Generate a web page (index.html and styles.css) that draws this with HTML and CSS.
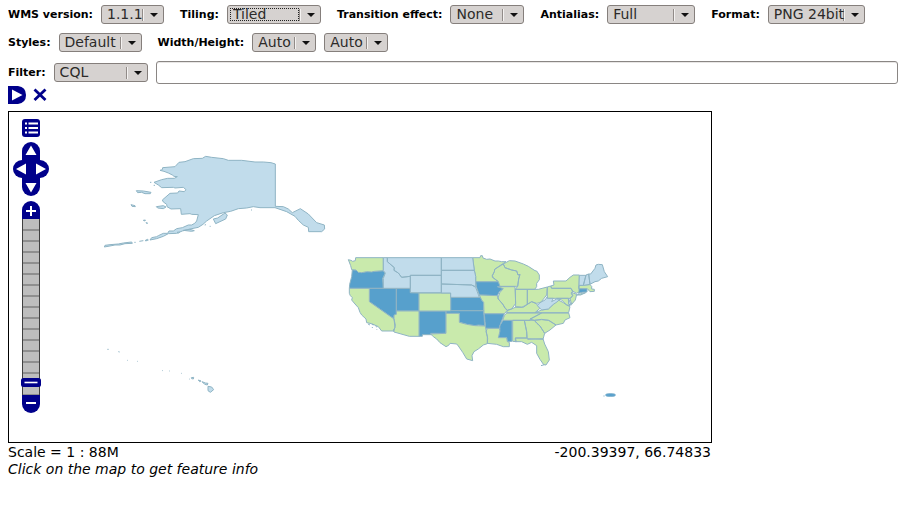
FILE: index.html
```html
<!DOCTYPE html>
<html lang="en">
<head>
<meta charset="utf-8">
<title>Map preview</title>
<link rel="stylesheet" href="styles.css">
</head>
<body>
<form class="toolbar">
  <div class="row">
    <div class="field"><label for="version">WMS version:</label><select id="version" class="w-version"><option>1.1.1</option><option>1.3.0</option></select></div>
    <div class="field"><label for="tiling">Tiling:</label><span class="focus-frame"><select id="tiling" class="w-wide"><option>Tiled</option><option>Single tile</option></select></span></div>
    <div class="field"><label for="transition">Transition effect:</label><select id="transition" class="w-transition"><option>None</option><option>Resize</option></select></div>
    <div class="field"><label for="antialias">Antialias:</label><select id="antialias" class="w-antialias"><option>Full</option><option>Text only</option><option>Disabled</option></select></div>
    <div class="field"><label for="format">Format:</label><select id="format" class="w-format"><option>PNG 24bit</option><option>PNG 8bit</option><option>GIF</option><option>JPEG</option></select></div>
  </div>
  <div class="row">
    <div class="field"><label for="styles">Styles:</label><select id="styles" class="w-styles"><option>Default</option></select></div>
    <div class="field"><label for="width">Width/Height:</label><select id="width" class="w-size"><option>Auto</option><option>600</option></select><select class="w-size" aria-label="Height"><option>Auto</option><option>300</option></select></div>
  </div>
  <div class="row filter">
    <div class="field grow"><label for="filter-type">Filter:</label><select id="filter-type" class="w-wide"><option>CQL</option><option>OGC</option><option>FeatureID</option></select><input type="text" aria-label="Filter expression"></div>
  </div>
  <div class="actions">
    <button type="button" aria-label="Apply filter"><svg width="18" height="18" viewBox="0 0 18 18"><path d="M0 0H10Q18 1 18 9T10 18H0Z" fill="#00008b"/><path d="M4 3.500L14.500 9L4 14.500Z" fill="#fff"/></svg></button>
    <button type="button" aria-label="Reset filter"><svg width="14" height="18" viewBox="0 0 14 18"><path d="M1.500 3.500L12.500 14M12.500 3.500L1.500 14" stroke="#00008b" stroke-width="2.800"/></svg></button>
  </div>
</form>
<main class="viewer">
  <svg class="map" viewBox="9 112 702 330" role="img" aria-label="Map of states">
    <g class="states" transform="translate(95 145) scale(.33333)">
      <path class="low" d="M541 184V57L528 53 505 51 480 51 440 46 400 46 385 41 350 37 332 34 322 40 295 41 270 50 252 52 240 65 203 68 202 74 195 76 207 79 220 84 232 90 237 94 247 95 238 100 218 100 200 104 177 112 190 120 200 128 235 127 240 129 265 127 273 134 268 140 252 138 248 144 225 145 202 165 205 171 215 178 216 185 228 192 257 191 259 208 285 206 290 208 310 209 305 228 299 235 290 240 280 240 262 248 245 251 235 258 222 258 218 265 205 265 190 272 185 275 170 278 165 285 185 281 205 274 220 266 245 265 262 258 285 252 310 247 324 238 335 228 358 212 385 203 407 199 430 191 455 189 475 185 495 188 540 188 575 200 600 214 610 226 625 240 640 247 641 260 680 260 689 252 688 240 665 233 640 207 616 191 592 203 580 192 565 185Z"/>
      <path class="low" d="M355 222L368 219 390 204 397 210 392 222 362 236ZM124 137L145 138 168 142 166 146 150 146 140 142 128 143ZM184 185L205 182 213 186 205 191 188 189ZM108 179L120 182 121 185 111 184ZM145 226L151 225 150 228ZM153 233L158 234 156 236ZM28 306L30 301 45 299 70 297 85 294 110 291 112 295 90 296 75 300 60 300 45 303ZM118 292L122 292M133 289L145 287M150 287L157 283 160 285 152 288M246 262L254 261 250 265ZM265 256L285 253 298 257 290 259ZM344 244L347 244M329 240L333 239M468 195L471 195M165 112L169 112M176 121L180 121"/>
    </g>
    <g class="states" transform="translate(340 245) scale(.33333)">
      <path class="high" d="M37 74L48 75 55 82 80 80 103 79 130 77 136 84 128 100 130 130H28L29 118 35 95ZM88 130H169V210L162 212V222L88 170ZM169 130H211V143L237 144V198H169ZM237 198H318V265H272L275 269H247V274H237ZM332 157H423L425 165 431 172V197H332ZM318 197H431L434 242 415 240 405 242 390 240 380 238 370 235 358 232V205H318ZM433 206H493L487 222 482 235 478 250H437ZM489 226H516V289L502 290 500 278H475L480 250 478 243 484 235ZM407 110H475L480 120 490 131 478 140 472 152 418 150 410 128ZM715 131H741V141L726 142 715 145Z"/>
      <path class="mid" d="M25 44L33 46 38 49 46 47 47 38H130V77L103 79 95 81 80 80 65 83 55 82 48 75 35 74 32 62ZM28 130H88V170L162 222 166 240 162 258H125L115 245 95 236 80 233 78 222 65 210 60 202 55 188 45 177 35 165 37 158 31 152 28 145ZM169 198H237V274H208L162 261 160 255 165 248 162 222V210L169 208ZM237 144H332V198H237ZM318 205H358V232L380 238 405 242 436 243 440 265 443 280 442 296 430 300 415 312 402 320 396 332 398 347 380 342 368 322 355 303 350 297 330 295 326 301 318 305 300 293 290 282 280 275 272 267 318 265ZM398 38H420L422 32 427 32 429 39 440 43 450 42 465 48 475 48 485 50 498 50 475 65 464 73 463 80 457 92 460 98 475 110H407V94L403 76ZM418 150L472 152 476 163 488 177 495 190 502 196 493 206H432L431 172 425 165ZM442 250H478L480 258 475 278H500L502 290 508 292V305L490 305 470 298 442 295V275L438 260ZM518 226H553L560 260V279H526L529 290 518 289ZM553 226H583L590 235 600 243 614 265 609 283 562 281 560 260ZM526 279H560L563 283 609 281 614 297 625 320 628 345 618 360 611 359 600 343 590 325 590 302 575 292 562 298 545 290 526 290ZM583 226L605 224 625 226 648 240 630 255 614 265 600 243ZM570 222L605 204H686L690 218 675 225 670 235 648 240 627 226 605 223 583 226ZM500 204H605L570 223V226H488L493 212ZM502 196L515 192 530 185 550 187 562 178 575 170 590 177 600 190 585 203H500ZM472 125H525L527 175 515 192 502 196 495 188 490 180 473 160 480 142 490 131ZM490 57L495 68 515 75 530 78 534 90 540 88 536 102 533 124H480L475 110 457 97 457 92 463 80 464 73ZM490 57L508 47 525 48 550 57 565 64 585 77 590 78 598 90 598 104 590 115 590 125 584 133H526L533 124 536 102 540 88 534 90 530 78 515 75 495 68ZM526 133H562V178L545 187 527 187ZM562 133H595L622 126 620 150 605 169 600 173 590 175 575 170 562 178ZM622 126L632 123 635 130H693L698 138 694 146 698 152 692 160H622ZM632 123L642 120 640 108H678L690 97 700 90H718L717 140 710 145 697 138 693 130H635ZM585 203L605 195 625 192 640 178 655 165 670 173 680 180 690 185 686 203ZM650 160H685L690 182 680 180 665 165ZM694 142L710 148 706 165 695 178 690 160 698 152ZM716 122L750 119 755 124 755 132 763 133V139L750 140 742 131H716ZM710 150L728 145 737 143 722 150Z"/>
      <path class="low" d="M130 38H142V50L163 68 162 76 175 84 185 97 211 94V130H130V100L136 84 130 77ZM142 38H304V91H211V94L185 97 175 84 162 76 163 68 142 50ZM211 91H304V143H211ZM304 38H398L403 76H304ZM304 76H403L407 94V125L395 120 304 117ZM304 117L395 120 407 127 418 157H332V144H304ZM592 182L600 173 615 165 622 155V160L640 160 635 170 650 162 660 163 648 173 640 178 625 192 605 195ZM685 160L694 180 686 178ZM718 91H738L730 121H717ZM738 90L746 87 750 118 730 121ZM746 87H752L765 70 768 60 775 58 787 59 793 80 803 95 785 100 775 108 765 110 750 118Z"/>
      <path class="low" d="M84 237L90 240M95 238L101 240M96 246L98 249M108 243L110 247M109 252L111 254M603 362L613 359M806 450L817 451"/>
    </g>
    <g class="states" transform="translate(0 330) scale(.33333)">
      <path class="low" d="M624 169L635 171 641 179 631 187 624 182ZM606 155L616 159 624 160 622 165 614 163ZM595 150L603 153 599 155ZM574 143L581 142 580 147 575 146ZM355 65L359 66M322 58L326 58M486 121L488 122M567 148L569 147M381 91L383 91M411 94L413 94M507 123L509 123M543 130L545 130"/>
    </g>
    <ellipse cx="610.500" cy="395" rx="5" ry="1.500" fill="#57a0cc" stroke="#7db0cb" stroke-width=".8"/>
    <circle cx="604" cy="396" r=".7" fill="#9fc2d3"/>
    <g class="controls">
      <rect x="22" y="119" width="18" height="18" rx="3"/>
      <path class="ink" d="M25 123.500H27M28.500 123.500H38M25 128H27M28.500 128H38M25 132.500H27M28.500 132.500H38" stroke-width="2.200"/>
      <rect x="22" y="142" width="18" height="54" rx="9"/>
      <rect x="13" y="160" width="36" height="18" rx="9"/>
      <path class="face" d="M31 145.500L36.500 155H25.500ZM31 192.500L25.500 183H36.500ZM16 169L26 163.500V174.500ZM46 169L36 163.500V174.500Z"/>
      <path d="M22 219V210A9 9 0 0 1 40 210V219Z"/>
      <path class="ink" d="M26 211H36M31 206V216" stroke-width="2"/>
      <path d="M22.500 219V395M39.500 219V395" stroke="#404040"/>
      <rect x="23" y="219" width="16" height="176" fill="#bebebe"/>
      <path d="M23 230H39M23 241H39M23 252H39M23 263H39M23 274H39M23 285H39M23 296H39M23 307H39M23 318H39M23 329H39M23 340H39M23 351H39M23 362H39M23 373H39M23 384H39M23 395H39" stroke="#808080" stroke-width="1.600"/>
      <rect x="21" y="378" width="20" height="9" rx="2.500"/>
      <path class="ink" d="M24.500 382.500H37.500" stroke-width="1.600"/>
      <path d="M22 395H40V404A9 9 0 0 1 22 404Z"/>
      <path class="ink" d="M26 403H36" stroke-width="2"/>
    </g>
  </svg>
  <div class="status"><span>Scale = 1 : 88M</span><span class="position">-200.39397, 66.74833</span></div>
</main>
<p class="hint">Click on the map to get feature info</p>
</body>
</html>
```
FILE: styles.css
```css
* { box-sizing: border-box; }
body {
  margin: 5px 15px 0 8px;
  background: #fff;
  color: #000;
  font-family: "DejaVu Sans", sans-serif;
  font-size: 14px;
  line-height: 17px;
}
.toolbar { display: flex; flex-direction: column; gap: 9px; }
.row { display: flex; flex-wrap: wrap; column-gap: 16px; row-gap: 9px; }
.field { display: flex; align-items: center; gap: 8px; }
.field label { font-size: 11px; font-weight: bold; line-height: 19px; white-space: nowrap; }
.grow { flex: 1; }
select {
  appearance: none;
  height: 19px;
  margin: 0;
  padding: 0 0 0 5px;
  border: 1px solid #857f7c;
  border-radius: 3px;
  color: #2c2a29;
  font: 14px/17px "DejaVu Sans", sans-serif;
  background-color: #d6d2d0;
  background-image:
    url("data:image/svg+xml,%3Csvg xmlns='http://www.w3.org/2000/svg' width='8' height='4'%3E%3Cpath d='M0 0H8L4 4Z' fill='%23111'/%3E%3C/svg%3E"),
    linear-gradient(90deg, #918b88 50%, #f4f2f1 50%);
  background-size: 8px 4px, 2px 12px;
  background-position: right 5px center, right 19px center;
  background-repeat: no-repeat;
}
.w-version { width: 63px; }
.w-wide { width: 94px; }
.w-transition { width: 74px; }
.w-antialias { width: 88px; }
.w-format { width: 97px; }
.w-styles { width: 83px; }
.w-size { width: 64px; }
.focus-frame { position: relative; display: flex; }
.focus-frame::after {
  content: "";
  position: absolute;
  inset: 3px 22px 3px 3px;
  border: 1px dotted #222;
  pointer-events: none;
}
input {
  flex: 1;
  min-width: 0;
  height: 23px;
  padding: 2px 5px;
  border: 1px solid #8a8684;
  border-radius: 3px;
  background: #fff;
  box-shadow: inset 0 1px #e8e6e5;
  font: 14px "DejaVu Sans", sans-serif;
}
.actions { display: flex; gap: 7px; margin-top: -7px; }
button { padding: 0; border: 0; background: none; }
button svg { display: block; }
.viewer { max-width: 704px; margin-top: 7px; }
.map { display: block; width: 100%; height: auto; border: 1px solid #000; }
.states path { stroke: #8fb4c4; stroke-width: 3; stroke-linejoin: round; }
.states .low { fill: #c1dceb; }
.states .mid { fill: #c9eaac; }
.states .high { fill: #57a0cc; }
.controls { fill: #00008b; }
.controls .ink { stroke: #fff; }
.controls .face { fill: #fff; }
.status { display: flex; justify-content: space-between; margin-top: 1px; }
.position { margin-right: 1px; }
.hint { margin: 0; font-style: italic; }
```
